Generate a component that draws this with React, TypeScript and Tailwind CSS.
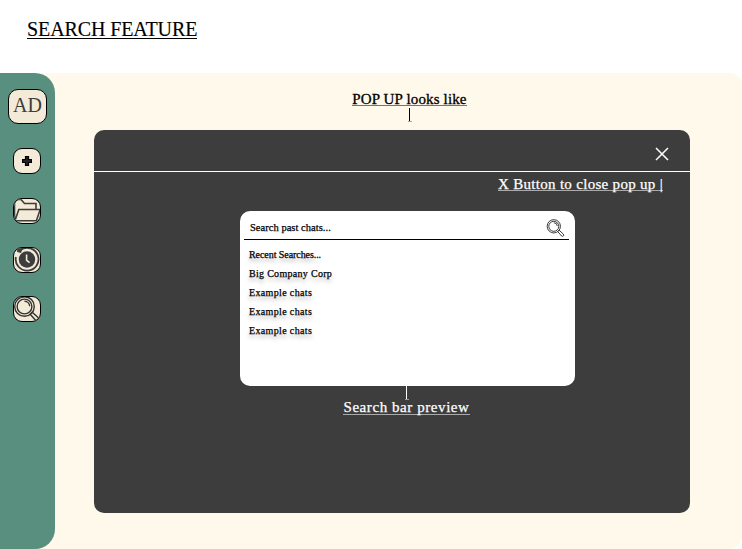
import type { ReactNode } from "react";

function Tile({ children }: { children: ReactNode }) {
  return (
    <button className="flex h-[26px] w-7 items-center justify-center overflow-hidden rounded-[9px] border border-black bg-[#f3ead7]">
      {children}
    </button>
  );
}

function Magnifier({ className }: { className: string }) {
  return (
    <svg className={className} viewBox="0 0 28 26" fill="none" stroke="#333" strokeWidth="1.4">
      <circle cx="11.5" cy="10.5" r="9.8" />
      <circle cx="11.5" cy="10.5" r="7.4" />
      <path d="M11.5 5.2a5.3 5.3 0 0 1 5.2 5" />
      <path d="m17.2 18.2 2-2 6.4 5.8q1.2 1.8-.2 2.8t-2.4 0l-5.8-6.6Z" />
    </svg>
  );
}

function Sidebar() {
  return (
    <nav className="flex w-[55px] shrink-0 flex-col items-center rounded-r-[20px] bg-[#598f7e] pt-4">
      <div className="flex h-[35px] w-[39px] items-center justify-center rounded-[10px] border border-black bg-[#f3ead7] pb-1 text-[20px] leading-none text-[#3d3d3d]">
        AD
      </div>
      <div className="mt-6 flex w-full flex-col items-center gap-[23px] pr-px">
        <div className="mb-px flex">
          <Tile>
            <svg className="h-[10px] w-[10px]" viewBox="0 0 10 10">
              <path d="M3.5.6h3v2.9h2.9v3H6.5v2.9h-3V6.5H.6v-3h2.9Z" fill="#222" stroke="#000" strokeWidth="1.2" />
            </svg>
          </Tile>
        </div>
        <Tile>
          <svg className="h-[26px] w-7 shrink-0" viewBox="0 0 28 26" fill="none" stroke="#3d3d3d" strokeWidth="1.6">
            <path d="M1.5 21V3q0-1.5 1.5-1.5h5l3.5 4H23v5.8M2 22.5l3.8-11h21.4l-3.8 11.3H2Z" />
          </svg>
        </Tile>
        <Tile>
          <svg className="h-[26px] w-7 shrink-0" viewBox="0 0 28 26" fill="none">
            <circle cx="14" cy="12.5" r="8.2" fill="#3d3d3d" />
            <path d="M13.6 7.5v5.8l3 2.4" stroke="#f3ead7" strokeWidth="1.6" />
            <path d="M7.5 2.9A11.4 11.4 0 1 1 2.9 10" stroke="#3d3d3d" strokeWidth="1.8" />
            <path d="m4.2.8 5.4.3-1.5 4.9-4-.9Z" fill="#3d3d3d" />
          </svg>
        </Tile>
        <Tile>
          <Magnifier className="h-[26px] w-7 shrink-0" />
        </Tile>
      </div>
    </nav>
  );
}

function SearchCard() {
  return (
    <section className="mt-5 ml-[146px] h-[175px] w-[335px] rounded-[10px] bg-white px-1 text-[10px] text-black [-webkit-text-stroke:0.25px_#000]">
      <div className="flex h-[29px] w-[325px] items-center justify-between border-b border-black pt-[5px] pr-1 pl-1.5">
        <span className="pt-px text-[10.5px] tracking-[0.03px]">Search past chats...</span>
        <Magnifier className="h-[18px] w-[19px]" />
      </div>
      <ul className="pt-[5px] pl-[5px] leading-[19px] [text-shadow:0_4px_4px_rgba(0,0,0,0.3)]">
        <li className="tracking-[-0.07px]">Recent Searches...</li>
        <li className="tracking-[0.3px]">Big Company Corp</li>
        <li className="tracking-[0.35px]">Example chats</li>
        <li className="tracking-[0.35px]">Example chats</li>
        <li className="tracking-[0.35px]">Example chats</li>
      </ul>
    </section>
  );
}

export default function App() {
  return (
    <div className="flex h-[549px] w-[742px] flex-col overflow-hidden bg-white font-['Liberation_Serif',serif]">
      <header className="h-[73px] shrink-0 pt-[19px] pl-[27px]">
        <h1 className="w-fit border-b border-black pt-px text-[20px] leading-[18px] tracking-[-0.1px] text-black [-webkit-text-stroke:0.15px_#000]">
          SEARCH FEATURE
        </h1>
      </header>
      <div className="flex flex-1 rounded-r-[12px] bg-[#fff9eb]">
        <Sidebar />
        <main className="flex flex-1 flex-col pl-[39px]">
          <div className="flex h-[57px] w-[631px] flex-col items-center pt-[18px] text-[15px] text-black [-webkit-text-stroke:0.3px_#000]">
            <p className="h-[15px] border-b border-[#77736c] leading-[16px] tracking-[0.15px]">POP UP looks like</p>
            <span className="mt-[2px] h-[13px] w-px bg-black" />
            <span className="h-px w-1 bg-[#aaa69e]" />
          </div>
          <div className="h-[383px] w-[596px] rounded-[10px] bg-[#3d3d3d] text-[15px] text-white">
            <div className="flex h-[42px] items-center justify-end border-b border-white pt-1.5 pr-[21px]">
              <svg className="h-[14px] w-[14px]" viewBox="0 0 14 14" stroke="white" strokeWidth="1.5">
                <path d="m1 1 12 12M13 1 1 13" />
              </svg>
            </div>
            <p className="mt-1 mr-[27px] ml-auto h-[15px] w-fit border-b border-[#aaa] leading-[16px] tracking-[0.3px] whitespace-nowrap [-webkit-text-stroke:0.25px_#fff]">
              X Button to close pop up |
            </p>
            <SearchCard />
            <div className="flex w-[625px] flex-col items-center">
              <span className="h-[13px] w-px bg-white" />
              <span className="h-px w-1 bg-[#999]" />
              <p className="h-[15px] border-b border-[#aaa] leading-[15px] tracking-[0.57px] [-webkit-text-stroke:0.25px_#fff]">
                Search bar preview
              </p>
            </div>
          </div>
        </main>
      </div>
    </div>
  );
}
